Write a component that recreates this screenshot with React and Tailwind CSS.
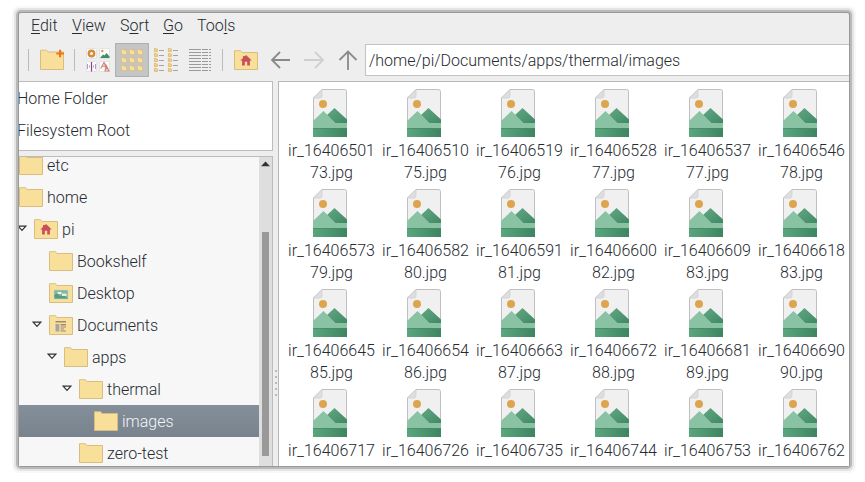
import React from "react";

const files = [
  ["16406501", "73"], ["16406510", "75"], ["16406519", "76"], ["16406528", "77"], ["16406537", "77"], ["16406546", "78"],
  ["16406573", "79"], ["16406582", "80"], ["16406591", "81"], ["16406600", "82"], ["16406609", "83"], ["16406618", "83"],
  ["16406645", "85"], ["16406654", "86"], ["16406663", "87"], ["16406672", "88"], ["16406681", "89"], ["16406690", "90"],
  ["16406717", "91"], ["16406726", "92"], ["16406735", "93"], ["16406744", "94"], ["16406753", "95"], ["16406762", "96"],
];

const tree = [
  { name: "etc", pad: "pl-0" },
  { name: "home", pad: "pl-0" },
  { name: "pi", pad: "pl-[15px]", open: true, kind: "home" },
  { name: "Bookshelf", pad: "pl-[30px]" },
  { name: "Desktop", pad: "pl-[30px]", kind: "desktop" },
  { name: "Documents", pad: "pl-[30px]", open: true, kind: "docs" },
  { name: "apps", pad: "pl-[45px]", open: true },
  { name: "thermal", pad: "pl-[60px]", open: true },
  { name: "images", pad: "pl-[75px]", selected: true },
  { name: "zero-test", pad: "pl-[60px]" },
];

function Folder({ kind }) {
  return (
    <svg width="24" height="20" viewBox="0 0 24 20" className="shrink-0">
      <path d="M.5 19.5V.7h5.800l1.900 1.800h15.300v17z" fill="#f9e09a" stroke="#d9bd80" />
      {kind === "home" && (
        <path d="M12 5l5.800 5.600h-1.900v5h-2.700v-3.800h-2.400v3.800H8.100v-5H6.200L9 7.900V6h1.500v.5z" fill="#c9505a" />
      )}
      {kind === "desktop" && (
        <g>
          <rect x="5" y="7" width="14" height="9" fill="#80b7a0" stroke="#cfd5bd" strokeWidth=".6" />
          <path d="M5.500 12l3-2 2 3 4-1 4 3v.5h-13z" fill="#579b80" />
          <rect x="8.5" y="9" width="4" height="2" fill="#edf3e7" />
          <rect x="13" y="10.5" width="4.5" height="2.5" fill="#e4eee1" />
        </g>
      )}
      {kind === "docs" && (
        <g fill="#9b8a78">
          <path d="M6.500 6h10.500v1.600H6.500zM11.500 9H17v1.500h-5.500zM11.500 11.500H17v1h-5.500zM11.500 13.500H15v1h-3.500zM11.500 15.500H17v1h-5.500z" />
          <path d="M6.500 9h3.800v7.500H6.500z" fill="#a5a5a7" />
        </g>
      )}
    </svg>
  );
}

function NewFolder() {
  return (
    <svg width="25" height="22" viewBox="0 0 25 22" className="shrink-0">
      <path d="M.5 20.500V1.200h5.800L8.200 3h15.300v17.500z" fill="#f9e09a" stroke="#d9bd80" />
      <path d="M19 .8h2.200v2.600H24v2.200h-2.800v2.700H19V5.600h-2.700V3.400H19z" fill="#ee7518" />
    </svg>
  );
}

function Picture() {
  return (
    <svg width="34" height="48" viewBox="0 0 34 48" className="block">
      <defs>
        <linearGradient id="hill" x1="0" y1="0" x2="1" y2="1">
          <stop offset="0" stopColor="#63a885" />
          <stop offset="1" stopColor="#3f8763" />
        </linearGradient>
        <linearGradient id="ground" x1="0" y1="0" x2="1" y2="0">
          <stop offset="0" stopColor="#5ba67f" />
          <stop offset="1" stopColor="#3d8560" />
        </linearGradient>
      </defs>
      <path d="M9 .5h22.500q2 0 2 2V47H.5V9z" fill="#f0f0f1" stroke="#bfbfc2" />
      <path d="M9 .5V7q0 2-2 2H.5z" fill="#dedee1" stroke="#cbcbcd" strokeWidth=".6" />
      <circle cx="10" cy="15" r="4" fill="#dda54d" />
      <path d="M14 26l7.500-7L34 30.500V35H20z" fill="url(#hill)" />
      <path d="M0 32l10.500-10 12 12H34v6H0z" fill="#8ac3a3" />
      <path d="M0 39h34v9H0z" fill="url(#ground)" />
      <path d="M0 39.500h34" stroke="#458d68" strokeWidth=".8" />
    </svg>
  );
}

function MixedView() {
  return (
    <svg width="24" height="24" viewBox="0 0 24 24" className="shrink-0">
      <g fill="#fbfbfb" stroke="#dedede" strokeWidth=".8">
        <rect x=".5" y=".5" width="10" height="10" rx="1" />
        <rect x="13.5" y=".5" width="10" height="10" rx="1" />
        <rect x=".5" y="13.5" width="10" height="10" rx="1" />
        <rect x="13.5" y="13.5" width="10" height="10" rx="1" />
      </g>
      <circle cx="5.5" cy="5.5" r="2.7" fill="none" stroke="#d78b3e" strokeWidth="2.4" />
      <circle cx="16.300" cy="3" r="1.2" fill="#dc9641" />
      <path d="M14 10l3-3.500 1.500 1 2-2.500 3 3.500V10z" fill="#438c69" />
      <path d="M5.500 14v9.500" stroke="#8c3f91" strokeWidth="1.2" />
      <path d="M1.500 16v5M3.500 17.500v2M7.500 17.500v2M9.500 16v5" stroke="#aaa1ae" />
      <path d="M14.800 20.500l3.200-6 3 7M16 18.300h4M20 17l3 6h-4z" fill="none" stroke="#cf8276" strokeWidth="1.1" />
    </svg>
  );
}

function IconsView() {
  return (
    <svg width="24" height="24" viewBox="0 0 24 24" className="shrink-0">
      {[1.5, 9.5, 17.5].map((y) => [1.5, 9.5, 17.5].map((x) => (
        <path key={`${x}-${y}`} d={`M${x} ${y}h2l.8.8H${x + 5}v4.200H${x}z`} fill="#fbdf95" stroke="#dfbd7d" strokeWidth=".8" />
      )))}
    </svg>
  );
}

function CompactView() {
  return (
    <svg width="24" height="24" viewBox="0 0 24 24" className="shrink-0">
      {[0, 5, 10, 15, 20].map((y) => [0, 14].map((x) => (
        <g key={`${x}-${y}`}>
          <path d={`M${x + 0.4} ${y + 0.4}h1.500l.5.6h1v2.400h-3z`} fill="#f3d583" stroke="#dab36b" strokeWidth=".8" />
          <path d={`M${x + 5} ${y + 2.5}h5`} stroke="#a4a4a4" />
        </g>
      )))}
    </svg>
  );
}

function ListView() {
  return (
    <svg width="23" height="24" viewBox="0 0 23 24" className="shrink-0" shapeRendering="crispEdges">
      {[0, 1, 2, 3, 4, 5, 6, 7].map((i) => (
        <path key={i} d={`M0 ${i * 3 + 1.5}h12M13 ${i * 3 + 1.5}h6M20 ${i * 3 + 1.5}h2`} stroke="#9a9a9a" />
      ))}
    </svg>
  );
}

function Arrow({ dir, dim }) {
  const d = dir === "left" ? "M20 10H2M10 2l-8 8 8 8" : dir === "right" ? "M0 10h18M11 2l8 8-8 8" : "M10 20V2M1.500 10L10 1.500l8.500 8.500";
  return (
    <svg width="20" height="20" viewBox="0 0 20 20" className="shrink-0">
      <path d={d} fill="none" stroke={dim ? "#cfcfcf" : "#8a8a8a"} strokeWidth="1.8" />
    </svg>
  );
}

function MenuItem({ before, mark, after, className }) {
  return <span className={className}>{before}<span className="underline decoration-1 underline-offset-2">{mark}</span>{after}</span>;
}

function TreeRow({ row }) {
  return (
    <div className={`flex h-8 shrink-0 items-center ${row.pad} ${row.selected ? "bg-linear-to-b from-[#858f9a] to-[#78838e] text-[#f4f5f6]" : ""}`}>
      {row.open && (
        <svg width="10" height="7" viewBox="0 0 10 7" className="-ml-[17px] mr-[7px] -mt-0.5 shrink-0">
          <path d="M1.200 1.200h7.600L5 5.300z" fill="#fff" stroke="#333" strokeWidth="1.2" />
        </svg>
      )}
      <Folder kind={row.kind} />
      <span className="ml-1 pt-0.5">{row.name}</span>
    </div>
  );
}

export default function App() {
  return (
    <div className="h-[482px] w-[865px] overflow-hidden bg-white pl-[19px] pt-[13px] font-['Roboto',sans-serif] text-base font-light text-[#252a30]">
      <div className="flex h-[453px] w-[830px] flex-col rounded-[2px] bg-[#eeeeee] shadow-[0_0_0_1px_#999,0_0_0_3px_#b9b9b9,0_0_0_5px_#e4e4e4,0_0_0_7px_#f8f8f8]">
        <div className="flex h-[25px] items-center pl-[12px]">
          <MenuItem mark="E" after="dit" className="w-[41px]" />
          <MenuItem mark="V" after="iew" className="w-[48px]" />
          <MenuItem before="S" mark="o" after="rt" className="w-[43px]" />
          <MenuItem mark="G" after="o" className="w-[34px]" />
          <MenuItem before="Too" mark="l" after="s" />
        </div>
        <div className="flex h-[43px] items-center">
          <div className="ml-[9px] h-[22px] w-px bg-[#bbb]" />
          <div className="ml-[11px]"><NewFolder /></div>
          <div className="ml-[9px] h-[22px] w-px bg-[#bbb]" />
          <div className="ml-[11px]"><MixedView /></div>
          <div className="ml-[5px] flex h-[34px] w-[34px] items-center justify-center border border-[#b0b0b0] bg-[#c4c5c5]"><IconsView /></div>
          <div className="ml-[5px]"><CompactView /></div>
          <div className="ml-[11px]"><ListView /></div>
          <div className="ml-[10px] h-[22px] w-px bg-[#bbb]" />
          <div className="ml-[11px]"><Folder kind="home" /></div>
          <div className="ml-[12px]"><Arrow dir="left" /></div>
          <div className="ml-[14px]"><Arrow dir="right" dim /></div>
          <div className="ml-[14px]"><Arrow dir="up" /></div>
          <div className="ml-[7px] flex h-8 flex-1 items-center border-y border-l border-[#c3c3c3] bg-white pl-[3px] pt-0.5 tracking-[-0.02px]">/home/pi/Documents/apps/thermal/images</div>
        </div>
        <div className="flex min-h-0 flex-1">
          <div className="flex w-[254px] flex-col">
            <div className="h-[70px] overflow-hidden border-y border-r border-[#bcbcbc] bg-white pt-px leading-8">
              <div className="-ml-0.5">Home Folder</div>
              <div className="-ml-0.5">Filesystem Root</div>
            </div>
            <div className="mt-[5px] flex min-h-0 flex-1 overflow-hidden border-r border-t border-[#bcbcbc] bg-[#f7f7f7]">
              <div className="-mt-2 w-[240px]">
                {tree.map((row) => <TreeRow key={row.name} row={row} />)}
              </div>
              <div className="flex flex-1 flex-col items-center bg-[#dedede] pb-2.5">
                <svg width="9" height="6" viewBox="0 0 9 6" className="mt-1 shrink-0"><path d="M4.500 .5L9 5.200H0z" fill="#333" /></svg>
                <div className="mt-[65px] w-[7px] flex-1 bg-[#999]" />
              </div>
            </div>
          </div>
          <div className="flex w-[5px] flex-col items-center justify-center gap-1 pt-[218px]">
            {[0, 1, 2, 3, 4].map((i) => <div key={i} className="size-0.5 shrink-0 bg-[#b8b8b8]" />)}
          </div>
          <div className="min-w-0 flex-1 overflow-hidden border-l border-t border-[#b8b8b8] bg-white pl-[4px] pt-[7px]">
            <div className="grid w-[564px] auto-rows-[100px] grid-cols-[repeat(6,94px)]">
              {files.map(([first, second]) => (
                <div key={first} className="flex flex-col items-center text-center leading-[22px]">
                  <Picture />
                  <div className="mt-[3px] pl-[3px]">ir_{first}<br />{second}.jpg</div>
                </div>
              ))}
            </div>
          </div>
        </div>
      </div>
    </div>
  );
}
